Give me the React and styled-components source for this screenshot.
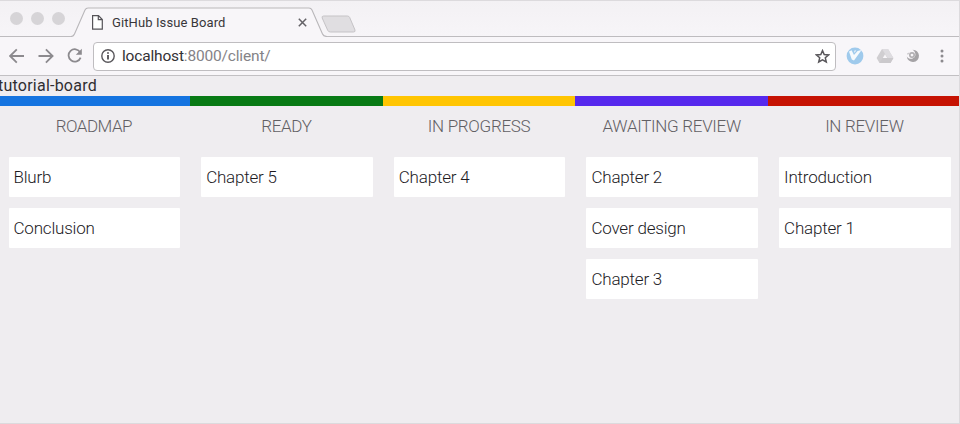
import React from "react";
import styled, { createGlobalStyle } from "styled-components";

const GlobalStyle = createGlobalStyle`
  * { box-sizing: border-box; }
  body { margin: 0; background: #efedf0; overflow: hidden; }
`;

const Window = styled.div`
  width: 960px;
  height: 424px;
  overflow: hidden;
  display: flex;
  flex-direction: column;
  background: #efedf0;
  border: solid #dcdadd;
  border-width: 1px 1px 1px 0;
  font-family: Roboto, "Liberation Sans", sans-serif;
`;

const TabStrip = styled.header`
  flex: none;
  height: 36px;
  display: flex;
  align-items: flex-start;
  background: linear-gradient(#f3f1f4, #f7f5f8);
  box-shadow: inset 0 -1px #bebcbf;
`;

const WindowControls = styled.div`
  display: flex;
  gap: 8px;
  padding: 11px 0 0 10px;
  width: 71px;
  flex: none;
`;

const ControlDot = styled.span`
  width: 13px;
  height: 13px;
  border-radius: 50%;
  background: #d6d4d7;
`;

const Tab = styled.div`
  position: relative;
  width: 256px;
  height: 36px;
  display: flex;
  align-items: center;
  padding: 7px 20px 0 21px;
`;

const TabShape = styled.svg`
  position: absolute;
  inset: 0;
`;

const TabTitle = styled.span`
  position: relative;
  flex: 1;
  margin-left: 9px;
  font-size: 13px;
  letter-spacing: 0.1px;
  line-height: 16px;
  color: #38363a;
  white-space: nowrap;
`;

const Glyph = styled.svg`
  position: relative;
  display: block;
  flex: none;
`;

const NewTab = styled.svg`
  flex: none;
  margin: 14px 0 0 -6px;
`;

const Toolbar = styled.nav`
  flex: none;
  height: 39px;
  display: flex;
  align-items: center;
  background: #f8f6f9;
  border-bottom: 1px solid #c2c0c3;
`;

const NavButtons = styled.div`
  display: flex;
  gap: 13px;
  width: 93px;
  padding-left: 9px;
`;

const AddressBar = styled.div`
  width: 743px;
  height: 29px;
  display: flex;
  align-items: center;
  padding: 0 5px 0 7px;
  background: #fff;
  border: 1px solid #bfbdc0;
  border-radius: 4px;
`;

const Url = styled.span`
  flex: 1;
  margin-left: 7px;
  font-size: 15.5px;
  letter-spacing: -0.17px;
  line-height: 20px;
  color: #858387;
`;

const Host = styled.span`
  color: #333135;
`;

const Extensions = styled.div`
  flex: 1;
  display: flex;
  align-items: center;
  justify-content: space-between;
  padding: 0 15px 0 10px;
`;

const ExtensionIcons = styled.div`
  display: flex;
  align-items: center;
  gap: 12px;
`;

const BoardTitle = styled.h1`
  flex: none;
  height: 19.5px;
  margin: 0 0 0 -2px;
  font-size: 16px;
  font-weight: 400;
  line-height: 20px;
  letter-spacing: 0.23px;
  color: #2f2d30;
`;

const Board = styled.main`
  flex: 1;
  display: grid;
  grid-template-columns: repeat(5, 192.65px);
  margin-left: -2.5px;
`;

const Column = styled.section`
  border-top: 10px solid ${(p) => p.$color};
`;

const ColumnTitle = styled.h2`
  height: 51px;
  margin: 0;
  text-align: center;
  font-size: 17px;
  font-weight: 300;
  line-height: 41px;
  letter-spacing: ${(p) => p.$spacing || "-0.3px"};
  color: #626064;
`;

const CardList = styled.div`
  display: flex;
  flex-direction: column;
  gap: 11px;
  padding: 0 10px 0 11px;
`;

const Card = styled.article`
  height: 40px;
  padding-left: 5px;
  border-radius: 1px;
  background: #fff;
  font-size: 17px;
  font-weight: 300;
  line-height: 40px;
  letter-spacing: -0.2px;
  color: #1d1b1f;
`;

const columns = [
  { title: "ROADMAP", spacing: "-0.5px", color: "#1574e0", cards: ["Blurb", "Conclusion"] },
  { title: "READY", color: "#087a15", cards: ["Chapter 5"] },
  { title: "IN PROGRESS", color: "#ffc502", cards: ["Chapter 4"] },
  { title: "AWAITING REVIEW", color: "#5629ed", cards: ["Chapter 2", "Cover design", "Chapter 3"] },
  { title: "IN REVIEW", color: "#c61303", cards: ["Introduction", "Chapter 1"] },
];

const PageIcon = () => (
  <Glyph width="11" height="15" viewBox="0 0 11 15" fill="#fff" stroke="#555358" strokeWidth="1.2">
    <path d="M.6.7H6.5L10.3 4.5V14.2H.6ZM6.3.7V4.7H10.3" />
  </Glyph>
);

const CloseIcon = () => (
  <Glyph width="9" height="9" viewBox="0 0 9 9" stroke="#646267" strokeWidth="1.5">
    <path d="M.8.8 8.2 8.2M8.2.8.8 8.2" />
  </Glyph>
);

const ArrowIcon = ({ forward }) => (
  <Glyph width="16" height="16" viewBox="0 0 16 16" fill="none" stroke="#8c8a8e" strokeWidth="1.8">
    <path d={forward ? "M.5 8H14.3M7.9 1.3 14.6 8 7.9 14.7" : "M15 8H1.7M7.8 1.3 1.1 8 7.8 14.7"} />
  </Glyph>
);

const ReloadIcon = () => (
  <Glyph width="16" height="16" viewBox="0 0 16 16" fill="none" stroke="#8c8a8e" strokeWidth="1.8">
    <path d="M13.2 4.4A6.2 6.2 0 1 0 13.6 9.6" />
    <path d="M14.8.8V6.8H8.8Z" fill="#8c8a8e" stroke="none" />
  </Glyph>
);

const InfoIcon = () => (
  <Glyph width="14" height="14" viewBox="0 0 14 14" fill="none" stroke="#59575b">
    <circle cx="7" cy="7" r="6.2" strokeWidth="1.4" />
    <path d="M7 6V10.6M7 3.2V4.8" strokeWidth="1.9" />
  </Glyph>
);

const StarIcon = () => (
  <Glyph width="15" height="15" viewBox="0 0 15 15" fill="none" stroke="#59575b" strokeWidth="1.5">
    <path d="M7.5 1.6 9.2 5.5 13.6 5.9 10.3 8.8 11.3 13 7.5 10.8 3.7 13 4.7 8.8 1.4 5.9 5.8 5.5Z" />
  </Glyph>
);

const BirdIcon = () => (
  <Glyph width="18" height="18" viewBox="0 0 18 18">
    <circle cx="9" cy="9" r="8.4" fill="#9fcaec" />
    <path d="M3 4.6 5.6 3.2 8 7.9 11.6 4.1 15.6 3 8 13.4 5.8 12.6Z" fill="#f6fafd" />
    <path d="M8.2 3.8 10.2 3.2 8.5 6Z" fill="#f6fafd" />
  </Glyph>
);

const DriveIcon = () => (
  <Glyph width="18" height="16" viewBox="0 0 18 16">
    <path d="M6 1H12L17.4 10 14.5 15H3.5L.6 10Z" fill="#d0ced1" />
    <path d="M6 1H12L17.4 10H11.6Z" fill="#dedce0" />
    <path d="M3.5 15 6.5 10H17.4L14.5 15Z" fill="#cbc9cc" />
    <path d="M9 6.2 11.2 10H6.8Z" fill="#f8f6f9" />
  </Glyph>
);

const SwirlIcon = () => (
  <Glyph width="14" height="14" viewBox="0 0 14 14">
    <path
      d="M6.6.8A6.1 6.1 0 1 1 .8 7.4C2 9.3 4.4 10.2 6.6 9.5A3.7 3.7 0 0 0 9.4 6C9.5 4 8.5 2.1 6.6.8Z"
      fill="#a5a3a6"
    />
    <circle cx="6" cy="6.1" r="2.2" fill="none" stroke="#b0aeb1" strokeWidth="1.6" />
    <path d="M1.2 5.2 3.4 4.2" stroke="#cccacd" strokeWidth="1.3" />
  </Glyph>
);

const MenuIcon = () => (
  <Glyph width="4" height="14" viewBox="0 0 4 14" fill="#8c8a8e">
    <circle cx="2" cy="2" r="1.5" />
    <circle cx="2" cy="7" r="1.5" />
    <circle cx="2" cy="12" r="1.5" />
  </Glyph>
);

export default function App() {
  return (
    <Window>
      <GlobalStyle />
      <TabStrip>
        <WindowControls>
          <ControlDot />
          <ControlDot />
          <ControlDot />
        </WindowControls>
        <Tab>
          <TabShape width="256" height="36" viewBox="0 0 256 36">
            <path
              d="M0 35.5Q2.5 35.5 3.5 33L14 9Q15 7 17 7H238Q240 7 241 9L251.5 33Q252.5 35.5 256 35.5V36H0Z"
              fill="#f8f6f9"
            />
            <path
              d="M0 35.5Q2.5 35.5 3.5 33L14 9Q15 7 17 7H238Q240 7 241 9L251.5 33Q252.5 35.5 256 35.5"
              fill="none"
              stroke="#b9b7ba"
              strokeWidth="1.1"
            />
          </TabShape>
          <PageIcon />
          <TabTitle>GitHub Issue Board</TabTitle>
          <CloseIcon />
        </Tab>
        <NewTab width="36" height="18" viewBox="0 0 36 18">
          <path
            d="M2.5 1H26.5Q28 1 28.7 2.5L34 15Q34.5 17 32.5 17H9.5Q7.5 17 6.8 15.5L1.2 3Q.6 1 2.5 1Z"
            fill="#e0dee1"
            stroke="#c5c3c6"
          />
        </NewTab>
      </TabStrip>
      <Toolbar>
        <NavButtons>
          <ArrowIcon />
          <ArrowIcon forward />
          <ReloadIcon />
        </NavButtons>
        <AddressBar>
          <InfoIcon />
          <Url>
            <Host>localhost</Host>:8000/client/
          </Url>
          <StarIcon />
        </AddressBar>
        <Extensions>
          <ExtensionIcons>
            <BirdIcon />
            <DriveIcon />
            <SwirlIcon />
          </ExtensionIcons>
          <MenuIcon />
        </Extensions>
      </Toolbar>
      <BoardTitle>tutorial-board</BoardTitle>
      <Board>
        {columns.map(({ title, spacing, color, cards }) => (
          <Column key={title} $color={color}>
            <ColumnTitle $spacing={spacing}>{title}</ColumnTitle>
            <CardList>
              {cards.map((card) => (
                <Card key={card}>{card}</Card>
              ))}
            </CardList>
          </Column>
        ))}
      </Board>
    </Window>
  );
}
